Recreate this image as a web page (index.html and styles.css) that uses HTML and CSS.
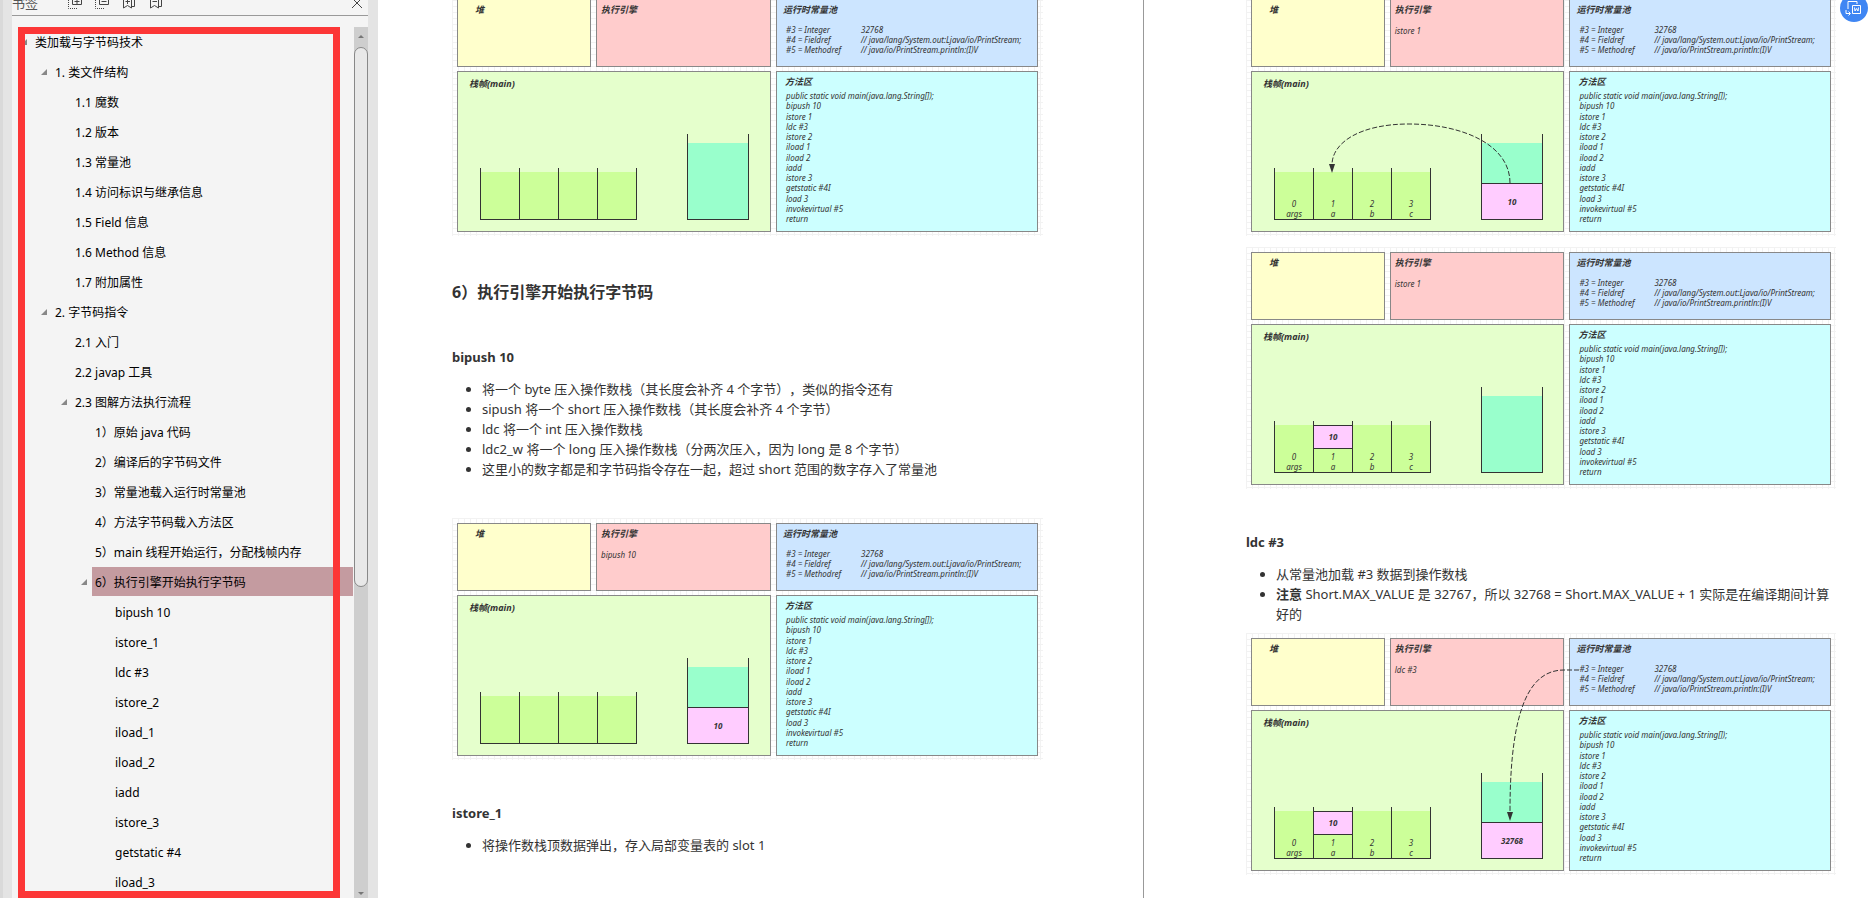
FILE: index.html
```html
<!DOCTYPE html>
<html lang="zh-CN">
<head>
  <meta charset="UTF-8" />
  <meta name="viewport" content="width=device-width, initial-scale=1.0"/>
  <title>类加载与字节码技术</title>
  <link rel="stylesheet" href="styles.css">
</head>
<body>
  <div class="viewer">
    <aside class="sidebar">
      <header class="toolbar">
        <span class="toolbar-title">书签</span>
        <button aria-label="展开全部"><svg width="14" height="16" viewBox="0 0 14 16"><path d="M4.500 3V11.500H13.500V3M6.500 8.500H11.500M9 6V11"/><path class="dots" d="M.500 5V15.500H10"/></svg></button>
        <button aria-label="折叠全部"><svg width="14" height="16" viewBox="0 0 14 16"><path d="M4.500 3V11.500H13.500V3M6.500 8.500H11.500"/><path class="dots" d="M.500 5V15.500H10"/></svg></button>
        <button aria-label="添加书签"><svg width="14" height="16" viewBox="0 0 14 16"><path d="M1.500 3V15L5.500 12.500L9.500 15V3M9.500 13.500H12.500V3M3.500 8.500H8M5.500 6V11"/></svg></button>
        <button aria-label="删除书签"><svg width="14" height="16" viewBox="0 0 14 16"><path d="M1.500 3V15L5.500 12.500L9.500 15V3M9.500 13.500H12.500V3M3.500 8.500H8"/></svg></button>
        <button class="close" aria-label="关闭"><svg width="12" height="12" viewBox="0 0 12 12"><path d="M1 1L11 11M11 1L1 11"/></svg></button>
      </header>
      <div class="sidebar-body">
        <ul class="tree">
          <li class="open"><a href="#">类加载与字节码技术</a></li>
          <li class="level-1 open"><a href="#">1. 类文件结构</a></li>
          <li class="level-2"><a href="#">1.1 魔数</a></li>
          <li class="level-2"><a href="#">1.2 版本</a></li>
          <li class="level-2"><a href="#">1.3 常量池</a></li>
          <li class="level-2"><a href="#">1.4 访问标识与继承信息</a></li>
          <li class="level-2"><a href="#">1.5 Field 信息</a></li>
          <li class="level-2"><a href="#">1.6 Method 信息</a></li>
          <li class="level-2"><a href="#">1.7 附加属性</a></li>
          <li class="level-1 open"><a href="#">2. 字节码指令</a></li>
          <li class="level-2"><a href="#">2.1 入门</a></li>
          <li class="level-2"><a href="#">2.2 javap 工具</a></li>
          <li class="level-2 open"><a href="#">2.3 图解方法执行流程</a></li>
          <li class="level-3"><a href="#">1）原始 java 代码</a></li>
          <li class="level-3"><a href="#">2）编译后的字节码文件</a></li>
          <li class="level-3"><a href="#">3）常量池载入运行时常量池</a></li>
          <li class="level-3"><a href="#">4）方法字节码载入方法区</a></li>
          <li class="level-3"><a href="#">5）main 线程开始运行，分配栈帧内存</a></li>
          <li class="level-3 open selected"><a href="#engine">6）执行引擎开始执行字节码</a></li>
          <li class="level-4"><a href="#bipush">bipush 10</a></li>
          <li class="level-4"><a href="#istore">istore_1</a></li>
          <li class="level-4"><a href="#ldc">ldc #3</a></li>
          <li class="level-4"><a href="#">istore_2</a></li>
          <li class="level-4"><a href="#">iload_1</a></li>
          <li class="level-4"><a href="#">iload_2</a></li>
          <li class="level-4"><a href="#">iadd</a></li>
          <li class="level-4"><a href="#">istore_3</a></li>
          <li class="level-4"><a href="#">getstatic #4</a></li>
          <li class="level-4"><a href="#">iload_3</a></li>
        </ul>
        <div class="scrollbar">
          <span class="arrow-up"></span>
          <span class="thumb"></span>
          <span class="arrow-down"></span>
        </div>
        <div class="highlight-frame"></div>
      </div>
    </aside>

    <main class="pages">
      <article class="page page-left">
        <div class="diagram" data-slots="empty"></div>

        <h3 id="engine">6）执行引擎开始执行字节码</h3>

        <h4 id="bipush">bipush 10</h4>
        <ul class="notes">
          <li>将一个 byte 压入操作数栈（其长度会补齐 4 个字节），类似的指令还有</li>
          <li>sipush 将一个 short 压入操作数栈（其长度会补齐 4 个字节）</li>
          <li>ldc 将一个 int 压入操作数栈</li>
          <li>ldc2_w 将一个 long 压入操作数栈（分两次压入，因为 long 是 8 个字节）</li>
          <li>这里小的数字都是和字节码指令存在一起，超过 short 范围的数字存入了常量池</li>
        </ul>
        <div class="diagram spaced" data-slots="empty" data-op="bipush 10" data-stack="10"></div>

        <h4 id="istore">istore_1</h4>
        <ul class="notes">
          <li>将操作数栈顶数据弹出，存入局部变量表的 slot 1</li>
        </ul>
      </article>

      <article class="page page-right">
        <div class="diagram" data-op="istore 1" data-stack="10" data-arrow="store"></div>
        <div class="diagram next" data-op="istore 1" data-local="10"></div>

        <h4 id="ldc">ldc #3</h4>
        <ul class="notes">
          <li>从常量池加载 #3 数据到操作数栈</li>
          <li><strong>注意</strong> Short.MAX_VALUE 是 32767，所以 32768 = Short.MAX_VALUE + 1 实际是在编译期间计算好的</li>
        </ul>
        <div class="diagram next" data-op="ldc #3" data-local="10" data-stack="32768" data-arrow="load"></div>
      </article>
    </main>

    <button class="convert" aria-label="转换为 Word">
      <svg width="28" height="28" viewBox="0 0 28 28"><path d="M8 15V7.500H17V10M12.500 11.500H20.500V19.500H12.500ZM14.500 13.500L15 17L16.500 14.500L18 17L18.500 13.500M6 16V19.500H10M8.500 17.500L10.500 19.500L8.500 21.500"/></svg>
    </button>
  </div>

  <script src="diagram.js"></script>
</body>
</html>
```

FILE: styles.css
```css
* {
  margin: 0;
  padding: 0;
  box-sizing: border-box;
}

body {
  font-family: "Noto Sans", "Noto Sans CJK SC", sans-serif;
  text-spacing-trim: space-all;
  background: #fff;
}

button {
  border: none;
  background: none;
  cursor: pointer;
}

ul {
  list-style: none;
}

svg {
  display: block;
  fill: none;
  stroke: #444;
}

.viewer {
  position: relative;
  display: flex;
  height: 100vh;
  overflow: hidden;
}

/* bookmarks panel */
.sidebar {
  flex: 0 0 378px;
  display: flex;
  flex-direction: column;
  border-left: 3px solid #d9d9d9;
  padding: 0 10px 0 9px;
  background: #e4e4e4;
}

.toolbar {
  display: flex;
  align-items: flex-end;
  gap: 13px;
  height: 16px;
  padding: 0 5px 6px 0;
  background: #f4f4f4;
  border-bottom: 1px solid #999;
}

.toolbar-title {
  width: 43px;
  font-size: 13px;
  line-height: 12px;
  color: #555;
}

.toolbar .close {
  margin-left: auto;
}

.dots {
  stroke-dasharray: 1 1;
}

.sidebar-body {
  position: relative;
  flex: 1;
  display: flex;
  min-height: 0;
  padding-top: 11px;
  background: #f4f4f4;
}

.tree {
  flex: 1;
  overflow: hidden;
  padding-left: 9px;
}

.tree li {
  height: 30px;
  padding: 0 1px 1px 11px;
  font-size: 12px;
  line-height: 32px;
}

.tree a {
  display: block;
  height: 29px;
  padding-left: 3px;
  color: #000;
  text-decoration: none;
  white-space: nowrap;
}

.tree .level-1 { padding-left: 31px; }
.tree .level-2 { padding-left: 51px; }
.tree .level-3 { padding-left: 71px; }
.tree .level-4 { padding-left: 91px; }

.tree .open::before {
  content: "";
  float: left;
  margin: 12px 0 0 -11px;
  border-left: 6px solid transparent;
  border-bottom: 6px solid #888;
}

.tree .selected a {
  background: #c49ba0;
}

.scrollbar {
  flex: 0 0 14px;
  display: flex;
  flex-direction: column;
  align-items: center;
  background: #cecece;
}

.arrow-up,
.arrow-down {
  border: 3px solid transparent;
}

.arrow-up {
  margin: 5px 0 9px;
  border-bottom-color: #777;
}

.thumb {
  width: 14px;
  height: 62%;
  border: 1px solid #888;
  border-radius: 7px;
  background: #e8e8e8;
}

.arrow-down {
  margin-top: auto;
  border-top-color: #777;
}

.highlight-frame {
  position: absolute;
  inset: 11px 28px 0 6px;
  border: 7px solid #fc3636;
  pointer-events: none;
}

/* document */
.pages {
  flex: 1;
  display: grid;
  grid-template-columns: 766fr 727fr;
  color: #333;
}

.page {
  min-width: 0;
  margin-top: -6px;
}

.page-left {
  padding: 0 100px 0 74px;
  border-right: 1px solid #999;
}

.page-right {
  padding: 0 35px 0 102px;
}

h3 {
  margin-top: 44px;
  font-size: 16px;
  line-height: 24px;
}

h4 {
  margin-top: 43px;
  font-size: 13px;
  line-height: 20px;
}

.notes {
  margin-top: 12px;
  padding-left: 30px;
  list-style: disc;
  font-size: 13px;
  line-height: 20px;
}

/* memory diagrams */
.diagram {
  position: relative;
  display: grid;
  grid-template-columns: 134fr 175fr 262fr;
  grid-template-rows: 68px 161px;
  gap: 4px 5px;
  height: 242px;
  padding: 5px 5px 4px;
  font-size: 8px;
  font-style: italic;
  line-height: 10px;
  background:
    repeating-linear-gradient(90deg, #f2f2f2 0 1px, transparent 1px 6px),
    repeating-linear-gradient(#f2f2f2 0 1px, transparent 1px 6px);
}

.diagram.spaced {
  margin-top: 39px;
}

.diagram.next {
  margin-top: 11px;
}

.notes + .diagram.next {
  margin-top: 9px;
}

.box {
  min-width: 0;
  border: 1px solid #888;
}

.box h5 {
  font-size: 9px;
  line-height: 12px;
}

.heap {
  padding: 4px 17px;
  background: #ffc;
}

.engine {
  padding: 4px;
  background: #fcc;
}

.engine p {
  margin-top: 10px;
}

.pool {
  padding: 4px 6px;
  background: #cce5ff;
}

.pool dl {
  display: grid;
  grid-template-columns: 75px 1fr;
  margin: 9px 0 0 3px;
  white-space: nowrap;
}

.frame {
  grid-column: span 2;
  display: flex;
  flex-direction: column;
  padding: 6px 11px 11px;
  background: #e5ffcc;
}

.method {
  display: flex;
  flex-direction: column;
  padding: 4px 8px;
  background: #cff;
}

.method ol {
  flex: 1;
  display: flex;
  flex-direction: column;
  justify-content: space-between;
  margin: 3px 0;
  padding-left: 1px;
  list-style: none;
}

.vessels {
  flex: 1;
  display: flex;
  align-items: flex-end;
  gap: 50px;
  padding-left: 11px;
}

.slots {
  display: flex;
  height: 52px;
  border-right: 1px solid #333;
  border-bottom: 1px solid #333;
}

.slot {
  display: flex;
  flex-direction: column;
  justify-content: flex-end;
  width: 39px;
  padding-top: 4px;
  border-left: 1px solid #333;
  text-align: center;
  background: linear-gradient(transparent 4px, #cf9 4px);
}

.value {
  display: flex;
  align-items: center;
  justify-content: center;
  border-top: 1px solid #333;
  background: #fcf;
}

.slot .value {
  height: 24px;
  margin-bottom: auto;
  border-bottom: 1px solid #333;
}

.tank {
  display: flex;
  flex-direction: column;
  justify-content: flex-end;
  width: 62px;
  height: 86px;
  border: solid #333;
  border-width: 0 1px 1px;
  background: linear-gradient(transparent 9px, #9fc 9px);
}

.tank .value {
  height: 36px;
}

.arrow {
  position: absolute;
  inset: 0;
  stroke: #333;
}

.arrow path {
  stroke-dasharray: 5 2;
}

.arrow polygon {
  fill: #333;
  stroke: none;
}

.convert {
  position: absolute;
  top: -6px;
  right: 3px;
  width: 28px;
  height: 28px;
  border-radius: 50%;
  background: #3f86f3;
}

.convert svg {
  stroke: #fff;
}
```

FILE: diagram.js
```js
const code = [
  "public static void main(java.lang.String[]);",
  "bipush 10",
  "istore 1",
  "ldc #3",
  "istore 2",
  "iload 1",
  "iload 2",
  "iadd",
  "istore 3",
  "getstatic #4I",
  "load 3",
  "invokevirtual #5",
  "return"
];

const pool = [
  ["#3 = Integer", "32768"],
  ["#4 = Fieldref", "// java/lang/System.out:Ljava/io/PrintStream;"],
  ["#5 = Methodref", "// java/io/PrintStream.println:(I)V"]
];

const locals = ["args", "a", "b", "c"];

const arrows = {
  store: '<path d="M264 189C264 150 215 130 163 130C115 130 86 148 86 171"/><polygon points="83,170 89,170 86,179"/>',
  load: '<path d="M333 37H318C286 37 264 70 264 178"/><polygon points="261,179 267,179 264,188"/>'
};

function value(text) {
  return text ? `<b class="value">${text}</b>` : "";
}

function slot(name, i, data) {
  if (data.slots === "empty") return '<div class="slot"></div>';
  return `<div class="slot">${i === 1 ? value(data.local) : ""}<span>${i}</span><span>${name}</span></div>`;
}

document.querySelectorAll(".diagram").forEach(el => {
  const data = el.dataset;
  el.innerHTML = `
    <section class="box heap"><h5>堆</h5></section>
    <section class="box engine"><h5>执行引擎</h5><p>${data.op || ""}</p></section>
    <section class="box pool"><h5>运行时常量池</h5>
      <dl>${pool.map(row => `<dt>${row[0]}</dt><dd>${row[1]}</dd>`).join("")}</dl>
    </section>
    <section class="box frame"><h5>栈帧(main)</h5>
      <div class="vessels">
        <div class="slots">${locals.map((name, i) => slot(name, i, data)).join("")}</div>
        <div class="tank">${value(data.stack)}</div>
      </div>
    </section>
    <section class="box method"><h5>方法区</h5>
      <ol>${code.map(line => `<li>${line}</li>`).join("")}</ol>
    </section>
    ${data.arrow ? `<svg class="arrow" width="590" height="242">${arrows[data.arrow]}</svg>` : ""}`;
});
```
